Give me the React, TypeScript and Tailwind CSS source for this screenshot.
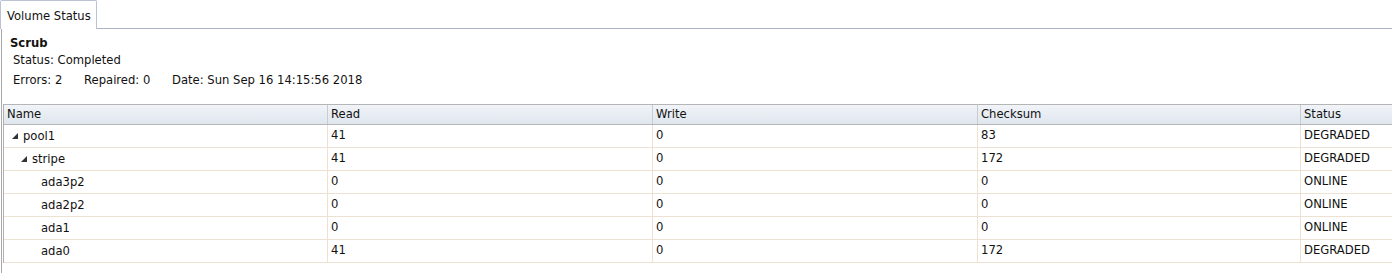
const rows = [
  { name: 'pool1', level: 0, expanded: true, read: '41', write: '0', checksum: '83', status: 'DEGRADED' },
  { name: 'stripe', level: 1, expanded: true, read: '41', write: '0', checksum: '172', status: 'DEGRADED' },
  { name: 'ada3p2', level: 2, read: '0', write: '0', checksum: '0', status: 'ONLINE' },
  { name: 'ada2p2', level: 2, read: '0', write: '0', checksum: '0', status: 'ONLINE' },
  { name: 'ada1', level: 2, read: '0', write: '0', checksum: '0', status: 'ONLINE' },
  { name: 'ada0', level: 2, read: '41', write: '0', checksum: '172', status: 'DEGRADED' },
];

function Arrow() {
  return (
    <svg width="6" height="6" viewBox="0 0 6 6" className="shrink-0">
      <polygon points="6,0 6,6 0,6" fill="#333" />
    </svg>
  );
}

export default function App() {
  return (
    <div className="w-[1392px] h-[273px] overflow-hidden bg-white text-[11.6px] text-[#111] font-['DejaVu_Sans',sans-serif]">
      {/* tab strip */}
      <div className="flex h-[29px]">
        <div className="w-[97px] h-[29px] border border-b-0 border-[#b9c3d3] rounded-t-[2px] bg-white pl-[6px] pt-[8px] leading-[14px] whitespace-nowrap">
          Volume Status
        </div>
        <div className="flex-1 border-b border-[#aab4c6]" />
      </div>

      <div className="border-l border-[#a9a9a9] ml-[1px] h-[244px]">
        {/* scrub info */}
        <div className="pl-[8px] pt-[7px]">
          <div className="font-bold leading-[14px]">Scrub</div>
          <div className="pl-[3px] mt-[3px] leading-[14px]">Status: Completed</div>
          <div className="pl-[3px] mt-[6px] leading-[14px] flex">
            <span className="w-[71px]">Errors: 2</span>
            <span className="w-[88px]">Repaired: 0</span>
            <span>Date: Sun Sep 16 14:15:56 2018</span>
          </div>
        </div>

        {/* grid */}
        <div className="mt-[17px] ml-[1px] border-l border-[#b0b0b0] overflow-hidden">
          <div className="flex h-[21px] border-t border-b border-[#b5b5b5] bg-gradient-to-b from-[#f1f4f8] to-[#dfe6ee]">
            <div className="w-[324px] shrink-0 border-r border-[#c7ccd3] pl-[3px] leading-[19px]">Name</div>
            <div className="w-[325px] shrink-0 border-r border-[#c7ccd3] pl-[3px] leading-[19px]">Read</div>
            <div className="w-[325px] shrink-0 border-r border-[#c7ccd3] pl-[3px] leading-[19px]">Write</div>
            <div className="w-[323px] shrink-0 border-r border-[#c7ccd3] pl-[3px] leading-[19px]">Checksum</div>
            <div className="w-[140px] shrink-0 pl-[3px] leading-[19px]">Status</div>
          </div>
          {rows.map((r) => (
            <div key={r.name} className="flex h-[23px] border-b border-[#ede1d1]">
              <div className="w-[324px] shrink-0 border-r border-[#ede1d1] flex items-center leading-[21px]">
                <span className={r.level === 0 ? 'w-[8px] shrink-0' : r.level === 1 ? 'w-[17px] shrink-0' : 'w-[37px] shrink-0'} />
                {r.expanded && (
                  <span className="w-[11px] shrink-0 flex items-center">
                    <Arrow />
                  </span>
                )}
                <span>{r.name}</span>
              </div>
              <div className="w-[325px] shrink-0 border-r border-[#ede1d1] pl-[3px] leading-[21px]">{r.read}</div>
              <div className="w-[325px] shrink-0 border-r border-[#ede1d1] pl-[3px] leading-[21px]">{r.write}</div>
              <div className="w-[323px] shrink-0 border-r border-[#ede1d1] pl-[3px] leading-[21px]">{r.checksum}</div>
              <div className="w-[140px] shrink-0 pl-[3px] leading-[21px]">{r.status}</div>
            </div>
          ))}
        </div>
      </div>
    </div>
  );
}
